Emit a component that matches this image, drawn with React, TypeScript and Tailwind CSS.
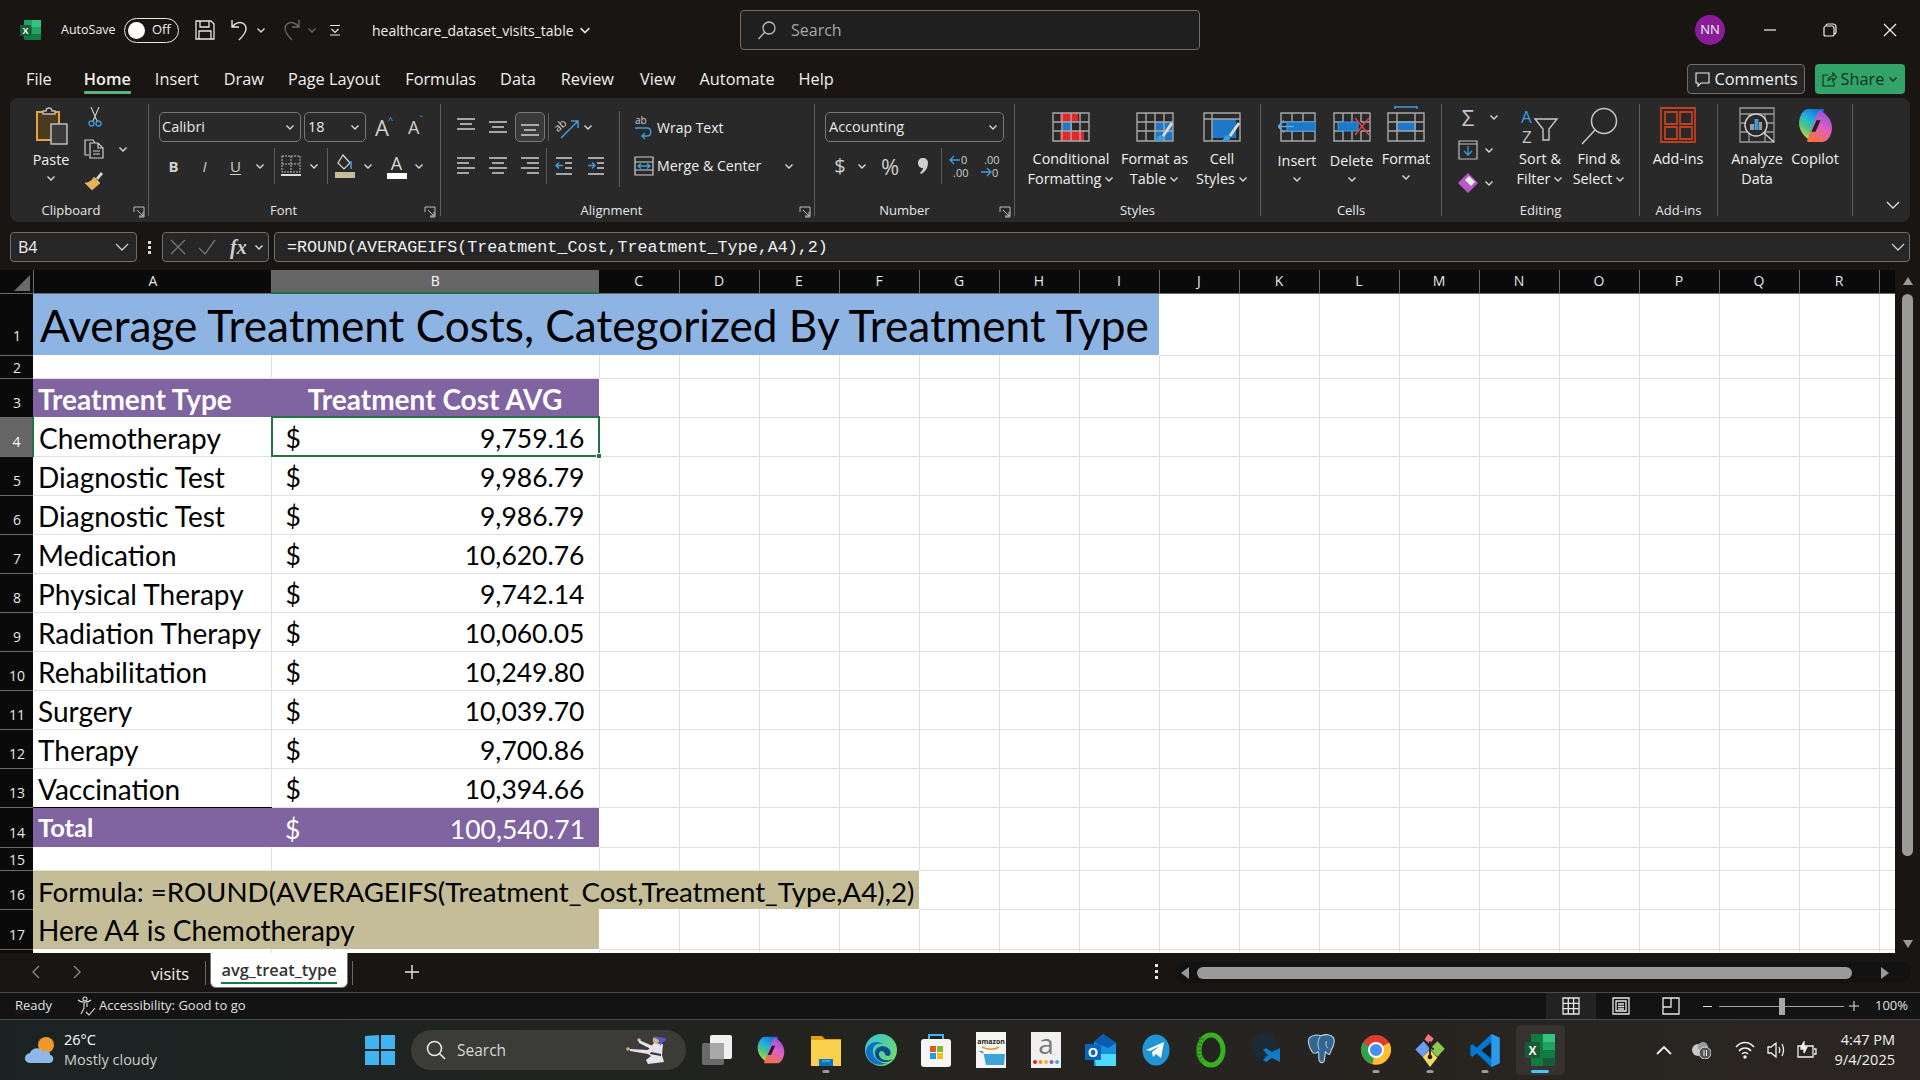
import type { ReactNode } from "react";

const Chev = ({ className = "" }: { className?: string }) => (
  <svg width="10" height="10" viewBox="0 0 10 10" fill="none" stroke="currentColor" strokeWidth="1.4" className={`text-[#d8d8d8] ${className}`}>
    <path d="M1.5 3.5 5 7l3.5-3.5" />
  </svg>
);

const Launcher = ({ className }: { className: string }) => (
  <svg width="12" height="12" viewBox="0 0 12 12" fill="none" stroke="#bdbdbd" strokeWidth="1" className={`absolute ${className}`}>
    <path d="M1 6V1h10v10H6M4 4l6 6M10 6v4H6" />
  </svg>
);

const VSep = ({ className = "h-[36px]" }: { className?: string }) => <div className={`w-px bg-[#5c5c5c] ${className}`} />;

const Group = ({ w, label, labelPad = "", children, launcher }: { w: string; label?: string; labelPad?: string; children: ReactNode; launcher?: string }) => (
  <div className={`relative flex flex-col border-r border-[#5c5c5c] ${w}`}>
    <div className="flex-1 min-h-0">{children}</div>
    <div className={`h-[12px] text-center text-[13px] leading-[12px] text-[#e6e6e6] ${labelPad}`}>{label}</div>
    {launcher && <Launcher className={launcher} />}
  </div>
);

const BigBtn = ({ w, icon, lines, chev, textGap = "" }: { w: string; icon: ReactNode; lines: string[]; chev?: boolean; textGap?: string }) => (
  <div className={`flex flex-col items-center ${w}`}>
    <div className="flex h-[45px] items-start justify-center">{icon}</div>
    <div className={textGap}>
      {lines.map((l, i) => (
        <div key={l} className="flex h-[20px] items-center justify-center gap-[3px] whitespace-nowrap text-[14.400px] leading-[20px] text-[#f0f0f0]">
          {l}
          {chev && i === lines.length - 1 && <Chev />}
        </div>
      ))}
    </div>
  </div>
);

const LinesIcon = ({ d, stroke = "#cfcfcf" }: { d: string; stroke?: string }) => (
  <svg width="20" height="20" viewBox="0 0 20 20" fill="none" stroke={stroke} strokeWidth="1.4">
    <path d={d} />
  </svg>
);

const GridFrame = ({ children }: { children: ReactNode }) => (
  <svg width="38" height="30" viewBox="0 0 38 30" fill="none" className="mt-[8px]">
    {children}
  </svg>
);

const gridLines = "M1 1h36v28H1zM1 10h36M1 19h36M10 1v28M19 1v28M28 1v28";

const CopilotIcon = ({ size, id }: { size: number; id: string }) => (
  <svg width={size} height={size} viewBox="0 0 36 36">
    <defs>
      <linearGradient id={`${id}a`} x1="0.700" y1="0" x2="0.200" y2="1">
        <stop offset="0" stopColor="#1470d8" />
        <stop offset="0.350" stopColor="#1eb0e0" />
        <stop offset="0.650" stopColor="#50c878" />
        <stop offset="1" stopColor="#f5d030" />
      </linearGradient>
      <linearGradient id={`${id}b`} x1="0.700" y1="0" x2="0.300" y2="1">
        <stop offset="0" stopColor="#9050e0" />
        <stop offset="0.500" stopColor="#e060c0" />
        <stop offset="1" stopColor="#f8703c" />
      </linearGradient>
    </defs>
    <path d="M11 2h14c2 0 1 2 0 4L17 28c-1 3-3 6-5 4C6 28 2 22 2 16 2 9 6 2 11 2z" fill={`url(#${id}a)`} />
    <path d="M25 34H11c-2 0-1-2 0-4l8-22c1-3 3-6 5-4 6 4 10 10 10 16 0 7-4 14-9 14z" fill={`url(#${id}b)`} />
    <path d="M19 13h4l-5 11h-4z" fill="#1e1e30" />
  </svg>
);

function TitleBar() {
  return (
    <div className="flex h-[60px] items-center text-[#f0f0f0]">
      <svg width="22" height="22" viewBox="0 0 22 22" className="ml-[19px]">
        <rect x="5" y="1" width="17" height="20" rx="1" fill="#107c41" />
        <rect x="13" y="1" width="9" height="7" fill="#33c481" />
        <rect x="13" y="8" width="9" height="7" fill="#21a366" />
        <rect x="5" y="1" width="8" height="7" fill="#21a366" />
        <rect x="1" y="6" width="11" height="11" rx="1" fill="#185c37" />
        <text x="3.500" y="15" fontSize="9" fontWeight="700" fill="#fff" fontFamily="Liberation Sans">X</text>
      </svg>
      <span className="ml-[20px] w-[55px] whitespace-nowrap text-[12.500px]">AutoSave</span>
      <div className="ml-[8px] flex h-[25px] w-[55px] items-center rounded-full border border-[#e8e8e8] pl-[3px]">
        <div className="h-[17px] w-[17px] rounded-full bg-white" />
        <span className="ml-[7px] text-[13px]">Off</span>
      </div>
      <svg width="20" height="20" viewBox="0 0 20 20" fill="none" stroke="#e6e6e6" strokeWidth="1.300" className="ml-[16px]">
        <path d="M1 1h15l3 3v15H1zM5 1v6h9V1M4 19v-8h12v8" />
      </svg>
      <svg width="20" height="22" viewBox="0 0 20 22" fill="none" stroke="#e6e6e6" strokeWidth="1.400" className="ml-[15px]">
        <path d="M2 1v7h7M2 8c3-4 8-6 12-3 4 4 2 9-5 16" />
      </svg>
      <Chev className="ml-[6px]" />
      <svg width="20" height="22" viewBox="0 0 20 22" fill="none" stroke="#6a6a6a" strokeWidth="1.400" className="ml-[15px]">
        <path d="M18 1v7h-7M18 8c-3-4-8-6-12-3-4 4-2 9 5 16" />
      </svg>
      <Chev className="ml-[6px] !text-[#666]" />
      <svg width="12" height="12" viewBox="0 0 12 12" fill="none" stroke="#e6e6e6" strokeWidth="1.200" className="ml-[12px]">
        <path d="M1 1.500h10M2.500 5 6 8.500 9.500 5M1 11h10" />
      </svg>
      <span className="ml-[31px] w-[202px] whitespace-nowrap text-[14px]">healthcare_dataset_visits_table</span>
      <Chev className="ml-[6px] scale-125" />
      <div className="ml-[150px] flex h-[40px] w-[460px] items-center rounded-[4px] border border-[#6e6e6e] bg-[#1f1f1f]">
        <svg width="20" height="20" viewBox="0 0 20 20" fill="none" stroke="#bdbdbd" strokeWidth="1.300" className="ml-[16px]">
          <circle cx="12" cy="8" r="6" />
          <path d="M7.500 12.500 1.500 19" />
        </svg>
        <span className="ml-[14px] text-[16px] text-[#a8a8a8]">Search</span>
      </div>
      <div className="ml-[495px] flex h-[30px] w-[30px] items-center justify-center rounded-full bg-[#8a1c9a] text-[13px]">NN</div>
      <svg width="14" height="14" viewBox="0 0 14 14" stroke="#eee" strokeWidth="1.200" className="ml-[38px]">
        <path d="M1 7h12" />
      </svg>
      <svg width="14" height="14" viewBox="0 0 14 14" fill="none" stroke="#eee" strokeWidth="1.200" className="ml-[46px]">
        <path d="M3 3V2.500C3 1.500 4 1 5 1h5c2 0 3 1 3 3v5c0 1-.5 2-1.500 2M1 5c0-1 1-2 2-2h6c1 0 2 1 2 2v7c0 1-1 1-2 1H3c-1 0-2 0-2-1z" />
      </svg>
      <svg width="14" height="14" viewBox="0 0 14 14" stroke="#eee" strokeWidth="1.300" className="ml-[46px]">
        <path d="M1 1l12 12M13 1 1 13" />
      </svg>
    </div>
  );
}

function TabsRow() {
  const tabs = [
    ["File", "ml-[26px]"],
    ["Home", "ml-[32px]"],
    ["Insert", "ml-[24px]"],
    ["Draw", "ml-[25px]"],
    ["Page Layout", "ml-[24px]"],
    ["Formulas", "ml-[25px]"],
    ["Data", "ml-[24px]"],
    ["Review", "ml-[25px]"],
    ["View", "ml-[26px]"],
    ["Automate", "ml-[24px]"],
    ["Help", "ml-[24px]"],
  ];
  return (
    <div className="flex h-[38px] items-start text-[16.300px] text-[#f0f0f0]">
      {tabs.map(([t, m]) => (
        <div key={t} className={`relative mt-[8px] leading-[22px] ${m} ${t === "Home" ? "font-semibold" : ""}`}>
          {t}
          {t === "Home" && <div className="absolute -bottom-[4px] left-0 right-0 h-[3px] rounded-[1px] bg-[#5cb27f]" />}
        </div>
      ))}
      <div className="ml-auto mt-[4px] flex h-[30px] w-[118px] items-center justify-center gap-[5px] rounded-[4px] border border-[#6e6e6e] bg-[#262626]">
        <svg width="15" height="15" viewBox="0 0 15 15" fill="none" stroke="#eee" strokeWidth="1.100">
          <path d="M1 1h13v10H6l-3 3v-3H1z" />
        </svg>
        <span>Comments</span>
      </div>
      <div className="ml-[10px] mr-[15px] mt-[4px] flex h-[30px] w-[90px] items-center justify-center gap-[4px] rounded-[4px] bg-[#33a467] text-[#10301f]">
        <svg width="15" height="16" viewBox="0 0 15 16" fill="none" stroke="#10301f" strokeWidth="1.100">
          <path d="M6 4H1v11h11v-4M6 10c0-3 2-5 5-5V2l3.500 4L11 10V7.500C9 7.500 7 8 6 10z" />
        </svg>
        <span>Share</span>
        <Chev className="!text-[#10301f]" />
      </div>
    </div>
  );
}

function Ribbon() {
  return (
    <div className="mx-[10px] flex h-[124px] rounded-[8px] bg-[#292929] py-[6px] text-[#e8e8e8]">
      <Group w="w-[139px]" label="Clipboard" labelPad="pr-[16px]" launcher="bottom-[-2px] right-[3px]">
        <div className="flex pl-[17px] pt-[3px]">
          <div className="flex w-[48px] flex-col items-center">
            <svg width="34" height="38" viewBox="0 0 34 38" fill="none">
              <path d="M3 5h22v28H3z" fill="#4a3a1e" stroke="#e8a33d" strokeWidth="2" />
              <path d="M9 7V4h3c0-4 6-4 6 0h3v3z" fill="#292929" stroke="#bdbdbd" strokeWidth="1.400" />
              <rect x="17" y="17" width="16" height="20" fill="#3a3a3a" stroke="#c8c8c8" strokeWidth="1.400" />
            </svg>
            <span className="mt-[5px] text-[14.400px] leading-[20px] text-[#f0f0f0]">Paste</span>
            <Chev className="mt-[3px]" />
          </div>
          <div className="ml-[9px] flex w-[56px] flex-col">
            <svg width="14" height="20" viewBox="0 0 14 20" fill="none" className="ml-[4px]">
              <path d="M3 0l6 14M11 0 5 14" stroke="#cfcfcf" strokeWidth="1.100" />
              <circle cx="3.500" cy="16.500" r="2.500" stroke="#3d9be0" strokeWidth="1.300" />
              <circle cx="10.500" cy="16.500" r="2.500" stroke="#3d9be0" strokeWidth="1.300" />
            </svg>
            <div className="mt-[12px] flex items-center">
              <svg width="20" height="20" viewBox="0 0 20 20" fill="none" stroke="#cfcfcf" strokeWidth="1.200">
                <path d="M5 16H1V1h8l2 3M6 4h8l5 5v10H6zM14 4v5h5M9 12h7M9 15h7" />
              </svg>
              <Chev className="ml-[14px]" />
            </div>
            <svg width="20" height="20" viewBox="0 0 20 20" fill="none" className="mt-[12px]">
              <path d="M12 7l5-6 2 2-5 6z" fill="#d8d8d8" />
              <path d="M10 6l6 6-8 7-7-7c3 0 7-2 9-6z" fill="#e8b25a" stroke="#f0c77a" strokeWidth="0.600" />
            </svg>
          </div>
        </div>
      </Group>
      <Group w="w-[292px]" label="Font" labelPad="pr-[22px]" launcher="bottom-[-2px] right-[4px]">
        <div className="flex items-center pl-[10px] pt-[8px]">
          <div className="flex h-[30px] w-[142px] items-center justify-between rounded-[5px] border border-[#777] pl-[2px] pr-[5px] text-[14.500px]">
            Calibri <Chev />
          </div>
          <div className="ml-[3px] flex h-[30px] w-[62px] items-center justify-between rounded-[5px] border border-[#777] pl-[3px] pr-[5px] text-[14.500px]">
            18 <Chev />
          </div>
          <div className="ml-[9px] flex w-[20px] items-start text-[22px] leading-[24px] text-[#cfcfcf]">
            A<span className="-ml-[1px] text-[9px] leading-[9px] text-[#5aa9e6]">^</span>
          </div>
          <div className="ml-[13px] flex w-[22px] items-start text-[18px] leading-[24px] text-[#cfcfcf]">
            A<span className="text-[9px] leading-[9px] text-[#5aa9e6]">ˇ</span>
          </div>
        </div>
        <div className="mt-[6px] flex h-[36px] items-center pl-[9px] text-[#cfcfcf]">
          <div className="w-[31px] text-center text-[15px] font-bold">B</div>
          <div className="w-[31px] text-center text-[15px] italic">I</div>
          <div className="w-[31px] text-center text-[15px] underline underline-offset-2">U</div>
          <div className="flex w-[18px] justify-center"><Chev /></div>
          <VSep className="ml-[5px] h-[36px]" />
          <svg width="20" height="22" viewBox="0 0 20 22" fill="none" stroke="#bdbdbd" strokeWidth="1" strokeDasharray="2 1" className="ml-[6px]">
            <path d="M1 1h18v16H1zM10 1v16M1 9h18" />
            <path d="M0 20h20" strokeDasharray="none" strokeWidth="2" stroke="#d8d8d8" />
          </svg>
          <div className="flex w-[26px] justify-center"><Chev /></div>
          <VSep />
          <svg width="20" height="24" viewBox="0 0 20 24" fill="none" className="ml-[7px]">
            <path d="M8 1l7 8-6 6-6-6z" stroke="#d8d8d8" strokeWidth="1.200" />
            <path d="M16 7v8" stroke="#3d9be0" strokeWidth="1.600" />
            <rect x="0" y="18" width="20" height="6" fill="#c4bd97" />
          </svg>
          <div className="flex w-[26px] justify-center"><Chev /></div>
          <div className="ml-[5px] flex w-[21px] flex-col items-center">
            <span className="text-[18px] leading-[18px] text-[#d8d8d8]">A</span>
            <div className="mt-[1px] h-[6px] w-[20px] bg-white" />
          </div>
          <div className="flex w-[24px] justify-center"><Chev /></div>
        </div>
      </Group>
      <Group w="w-[374px]" label="Alignment" labelPad="pr-[32px]" launcher="bottom-[-2px] right-[3px]">
        <div className="flex">
          <div className="w-[178px] pl-[14px] pt-[8px]">
            <div className="flex h-[30px] items-center">
              <div className="flex w-[32px] justify-start pl-[1px]"><LinesIcon d="M1 2h18M4 7h12M1 12h18" /></div>
              <div className="flex w-[28px] justify-start pl-[1px]"><LinesIcon d="M1 5h18M4 10h12M1 15h18" /></div>
              <div className="flex h-[30px] w-[30px] items-center justify-center rounded-[5px] border border-[#777] bg-[#3a3a3a]"><LinesIcon d="M1 8h18M4 13h12M1 18h18" /></div>
              <VSep className="ml-[3px] h-[28px]" />
              <svg width="24" height="24" viewBox="0 0 24 24" fill="none" className="ml-[6px] overflow-visible">
                <text x="0" y="14" fontSize="11" fill="#cfcfcf" fontFamily="Open Sans" transform="rotate(-40 6 12)">ab</text>
                <path d="M6 23 23 6M16 6h7v7" stroke="#3d9be0" strokeWidth="1.500" />
              </svg>
              <Chev className="ml-[4px]" />
            </div>
            <div className="mt-[6px] flex h-[36px] items-center">
              <div className="flex w-[32px] pl-[1px]"><LinesIcon d="M1 2h18M1 7h12M1 12h18M1 17h12" /></div>
              <div className="flex w-[32px] pl-[1px]"><LinesIcon d="M1 2h18M4 7h12M1 12h18M4 17h12" /></div>
              <div className="flex w-[27px] pl-[1px]"><LinesIcon d="M1 2h18M7 7h12M1 12h18M7 17h12" /></div>
              <VSep />
              <div className="ml-[7px] w-[32px]">
                <svg width="20" height="20" viewBox="0 0 20 20" fill="none" stroke="#cfcfcf" strokeWidth="1.400"><path d="M2 2h16M11 7h7M11 12h7M2 18h16" /><path d="M9 9.500H2M5 6.500l-3 3 3 3" stroke="#3d9be0" /></svg>
              </div>
              <svg width="20" height="20" viewBox="0 0 20 20" fill="none" stroke="#cfcfcf" strokeWidth="1.400"><path d="M2 2h16M11 7h7M11 12h7M2 18h16" /><path d="M2 9.500h7M6 6.500l3 3-3 3" stroke="#3d9be0" /></svg>
            </div>
          </div>
          <VSep className="mt-[7px] h-[76px]" />
          <div className="pl-[12px] pt-[8px]">
            <div className="flex h-[30px] items-center">
              <svg width="22" height="24" viewBox="0 0 22 24" fill="none" className="overflow-visible">
                <text x="3" y="9" fontSize="10" fill="#cfcfcf" fontFamily="Open Sans">ab</text>
                <path d="M3 13h12c5 0 5 8 0 8h-4M13 18l-3 3 3 3" stroke="#3d9be0" strokeWidth="1.400" />
              </svg>
              <span className="ml-[3px] text-[14px] text-[#f0f0f0]">Wrap Text</span>
            </div>
            <div className="mt-[6px] flex h-[36px] items-center">
              <svg width="22" height="22" viewBox="0 0 22 22" fill="none" stroke="#cfcfcf" strokeWidth="1.200">
                <path d="M3 2h18v18H3zM3 7h18M3 15h18" />
                <path d="M6 11h12M9 8.500 6 11l3 2.500M15 8.500 18 11l-3 2.500" stroke="#3d9be0" strokeWidth="1.400" />
              </svg>
              <span className="ml-[3px] text-[14.200px] text-[#f0f0f0]">Merge &amp; Center</span>
              <Chev className="ml-[23px]" />
            </div>
          </div>
        </div>
      </Group>
      <Group w="w-[200px]" label="Number" labelPad="pr-[20px]" launcher="bottom-[-2px] right-[3px]">
        <div className="pl-[10px] pt-[8px]">
          <div className="flex h-[30px] w-[179px] items-center justify-between rounded-[5px] border border-[#777] pl-[3px] pr-[5px] text-[14.500px]">
            Accounting <Chev />
          </div>
          <div className="mt-[6px] flex h-[36px] items-center text-[#cfcfcf]">
            <span className="ml-[8px] w-[14px] text-center text-[20px]">$</span>
            <Chev className="ml-[10px]" />
            <span className="ml-[11px] w-[24px] text-center text-[22px]">%</span>
            <svg width="12" height="18" viewBox="0 0 12 18" className="ml-[15px]">
              <path d="M6 1c3 0 5 2 5 5 0 5-3 9-7 11l-1-1c2-2 3-4 3-5C3 11 1 9 1 6s2-5 5-5z" fill="#cfcfcf" />
            </svg>
            <VSep className="ml-[12px] h-[36px]" />
            <svg width="22" height="26" viewBox="0 0 22 26" className="ml-[7px] overflow-visible">
              <path d="M1 7h10M5 3 1 7l4 4" fill="none" stroke="#3d9be0" strokeWidth="1.400" />
              <text x="12" y="11" fontSize="11" fill="#cfcfcf" fontFamily="Open Sans">0</text>
              <text x="4" y="24" fontSize="11" fill="#cfcfcf" fontFamily="Open Sans">.00</text>
            </svg>
            <svg width="22" height="26" viewBox="0 0 22 26" className="ml-[9px] overflow-visible">
              <text x="4" y="11" fontSize="11" fill="#cfcfcf" fontFamily="Open Sans">.00</text>
              <path d="M1 19h10M7 15l4 4-4 4" fill="none" stroke="#3d9be0" strokeWidth="1.400" />
              <text x="12" y="24" fontSize="11" fill="#cfcfcf" fontFamily="Open Sans">0</text>
            </svg>
          </div>
        </div>
      </Group>
      <Group w="w-[246px]" label="Styles">
        <div className="flex pl-[10px]">
          <BigBtn
            w="w-[92px]"
            lines={["Conditional", "Formatting"]}
            chev
            icon={
              <GridFrame>
                <path d="M8 1h18v9H8zM8 19h24v10H8z" fill="#e0282a" />
                <path d="M10 10h10v9H10z" fill="#1e78c8" />
                <path d={gridLines} stroke="#a8a8a8" strokeWidth="1.400" />
              </GridFrame>
            }
          />
          <BigBtn
            w="w-[75px]"
            lines={["Format as", "Table"]}
            chev
            icon={
              <GridFrame>
                <path d="M19 10h18v18H19z" fill="#1e78c8" />
                <path d={gridLines} stroke="#a8a8a8" strokeWidth="1.400" />
                <path d="M36 11 27 24" stroke="#d8d8d8" strokeWidth="3" />
                <path d="M22 24c3-2 6 0 5 3-2 3-6 3-9 2 2-1 3-3 4-5z" fill="#3d9be0" />
              </GridFrame>
            }
          />
          <BigBtn
            w="w-[60px]"
            lines={["Cell", "Styles"]}
            chev
            icon={
              <GridFrame>
                <path d="M9 7h24v19H9z" fill="#1e78c8" />
                <path d="M1 1h36v28H1zM1 7h36M9 1v28" stroke="#a8a8a8" strokeWidth="1.400" />
                <path d="M36 11 27 24" stroke="#d8d8d8" strokeWidth="3" />
                <path d="M22 24c3-2 6 0 5 3-2 3-6 3-9 2 2-1 3-3 4-5z" fill="#3d9be0" />
              </GridFrame>
            }
          />
        </div>
      </Group>
      <Group w="w-[181px]" label="Cells">
        <div className="flex pl-[9px]">
          <div className="w-[54px]">
            <BigBtn
              w="w-[54px]"
              lines={["Insert"]}
              textGap="mt-[2px]"
              icon={
                <GridFrame>
                  <path d="M3 1h34v28H3zM3 10h34M3 19h34M14 1v28M25 1v28" stroke="#a8a8a8" strokeWidth="1.400" />
                  <path d="M9 10h29v9H9z" fill="#1e78c8" stroke="#3d9be0" />
                  <path d="M16 14.500H0M6 8.500l-6 6 6 6" stroke="#5aa9e6" strokeWidth="1.500" />
                </GridFrame>
              }
            />
            <div className="mt-[3px] flex justify-center"><Chev /></div>
          </div>
          <div className="w-[55px]">
            <BigBtn
              w="w-[55px]"
              lines={["Delete"]}
              textGap="mt-[2px]"
              icon={
                <GridFrame>
                  <path d="M1 1h36v28H1zM1 10h10M1 19h10M28 10h9M28 19h9M10 1v9M10 19v10M19 1v9M19 19v10M28 1v9M28 19v10" stroke="#a8a8a8" strokeWidth="1.400" />
                  <path d="M5 10h20v9H5z" fill="#1e78c8" stroke="#3d9be0" />
                  <path d="M22 6l14 17M36 6 22 23" stroke="#e04040" strokeWidth="1.600" />
                </GridFrame>
              }
            />
            <div className="mt-[3px] flex justify-center"><Chev /></div>
          </div>
          <div className="w-[54px]">
            <BigBtn
              w="w-[54px]"
              lines={["Format"]}
              icon={
                <svg width="38" height="36" viewBox="0 0 38 36" fill="none" className="mt-[2px]">
                  <path d="M8 1h22M8 0v3M30 0v3" stroke="#3d9be0" strokeWidth="1.400" />
                  <path d="M9 15h20v10H9z" fill="#1e78c8" />
                  <path d="M1 7h36v28H1zM1 16h36M1 25h36M10 7v28M28 7v28" stroke="#a8a8a8" strokeWidth="1.400" />
                </svg>
              }
            />
            <div className="mt-[3px] flex justify-center"><Chev /></div>
          </div>
        </div>
      </Group>
      <Group w="w-[198px]" label="Editing">
        <div className="flex pl-[16px]">
          <div className="flex w-[51px] flex-col gap-[13px] pt-[3px]">
            <div className="flex items-center">
              <span className="w-[20px] text-center text-[22px] leading-[20px] text-[#c8c8c8]">Σ</span>
              <Chev className="ml-[11px]" />
            </div>
            <div className="flex items-center">
              <svg width="20" height="20" viewBox="0 0 20 20" fill="none">
                <path d="M1 1h18v18H1zM1 4h18" stroke="#bdbdbd" strokeWidth="1.200" />
                <path d="M10 6v9M6 11l4 4 4-4" stroke="#3d9be0" strokeWidth="1.300" />
              </svg>
              <Chev className="ml-[6px]" />
            </div>
            <div className="flex items-center">
              <svg width="20" height="20" viewBox="0 0 20 20" fill="none">
                <path d="M10 0l10 10-10 10L0 10z" fill="#b65ac8" />
                <path d="M7 7l6 6 4-4-6-6z" fill="#e8e8e8" />
              </svg>
              <Chev className="ml-[6px]" />
            </div>
          </div>
          <BigBtn
            w="w-[62px]"
            lines={["Sort &", "Filter"]}
            chev
            icon={
              <svg width="38" height="38" viewBox="0 0 38 38" className="mt-[3px] overflow-visible">
                <text x="0" y="16" fontSize="17" fill="#3d9be0" fontFamily="Open Sans">A</text>
                <text x="1" y="36" fontSize="17" fill="#c8c8c8" fontFamily="Open Sans">Z</text>
                <path d="M14 12h22l-8 10v11h-6V22z" fill="none" stroke="#c8c8c8" strokeWidth="1.400" />
              </svg>
            }
          />
          <BigBtn
            w="w-[56px]"
            lines={["Find &", "Select"]}
            chev
            icon={
              <svg width="38" height="38" viewBox="0 0 38 38" fill="none" stroke="#c8c8c8" strokeWidth="1.500" className="mt-[3px]">
                <circle cx="24" cy="14" r="12.500" />
                <path d="M15 23 2 37" />
              </svg>
            }
          />
        </div>
      </Group>
      <Group w="w-[78px]" label="Add-ins">
        <div className="flex flex-col items-center pr-[1px]">
          <BigBtn
            w="w-[70px]"
            lines={["Add-ins"]}
            icon={
              <svg width="36" height="36" viewBox="0 0 36 36" fill="none" stroke="#c43e1c" strokeWidth="1.800" className="mt-[3px]">
                <path d="M1 1h34v34H1zM5 5h12v12H5zM20 5h12v12H20zM5 20h12v12H5zM20 20h12v12H20z" />
              </svg>
            }
          />
        </div>
      </Group>
      <Group w="w-[135px]">
        <div className="flex pl-[10px]">
          <BigBtn
            w="w-[58px]"
            lines={["Analyze", "Data"]}
            icon={
              <svg width="36" height="36" viewBox="0 0 36 36" fill="none" className="mt-[3px]">
                <path d="M1 1h34v34H1zM1 7h34M1 16h34M1 25h34M10 7v28M26 7v28" stroke="#9a9a9a" strokeWidth="1.300" />
                <circle cx="17" cy="18" r="11" fill="#292929" stroke="#d0d0d0" strokeWidth="1.400" />
                <path d="M25 26l10 9" stroke="#d0d0d0" strokeWidth="1.600" />
                <path d="M11 17h4v6h-4z" fill="#9a9a9a" />
                <path d="M15.500 12h4v11h-4z" fill="#3d9be0" />
                <path d="M20 15h3v8h-3z" fill="#9a9a9a" />
              </svg>
            }
          />
          <BigBtn w="w-[58px]" lines={["Copilot"]} icon={<div className="mt-[3px]"><CopilotIcon size={37} id="cpr" /></div>} />
        </div>
      </Group>
      <div className="flex flex-1 items-end justify-center pb-[6px] pl-[22px]">
        <svg width="14" height="10" viewBox="0 0 14 10" fill="none" stroke="#e0e0e0" strokeWidth="1.300">
          <path d="M1 2l6 6 6-6" />
        </svg>
      </div>
    </div>
  );
}

function FormulaBar() {
  return (
    <div className="mx-[10px] mt-[10px] flex h-[30px] items-center text-[#f0f0f0]">
      <div className="flex h-full w-[127px] items-center justify-between rounded-[4px] border border-[#6e6e6e] bg-[#262626] pl-[7px] pr-[7px] text-[16px]">
        B4
        <svg width="14" height="10" viewBox="0 0 14 10" fill="none" stroke="#cfcfcf" strokeWidth="1.300"><path d="M1 2l6 6 6-6" /></svg>
      </div>
      <div className="ml-[11px] flex flex-col gap-[2px]">
        <div className="h-[3px] w-[3px] bg-[#d8d8d8]" />
        <div className="h-[3px] w-[3px] bg-[#d8d8d8]" />
        <div className="h-[3px] w-[3px] bg-[#d8d8d8]" />
      </div>
      <div className="ml-[11px] flex h-full w-[107px] items-center rounded-[4px] border border-[#6e6e6e] bg-[#262626]">
        <svg width="16" height="16" viewBox="0 0 16 16" stroke="#777" strokeWidth="1.300" className="ml-[7px]"><path d="M1 1l14 14M15 1 1 15" /></svg>
        <svg width="18" height="16" viewBox="0 0 18 16" fill="none" stroke="#777" strokeWidth="1.300" className="ml-[12px]"><path d="M1 9l6 6L17 1" /></svg>
        <span className="ml-[14px] font-['Liberation_Serif',serif] text-[20px] font-bold italic text-[#cfcfcf]">fx</span>
        <Chev className="ml-[7px]" />
      </div>
      <div className="ml-[5px] flex h-full flex-1 items-center justify-between rounded-[4px] border border-[#6e6e6e] bg-[#262626] pl-[12px] pr-[4px]">
        <span className="pt-[1px] font-['Liberation_Mono',monospace] text-[16.700px]">=ROUND(AVERAGEIFS(Treatment_Cost,Treatment_Type,A4),2)</span>
        <svg width="14" height="10" viewBox="0 0 14 10" fill="none" stroke="#cfcfcf" strokeWidth="1.300"><path d="M1 2l6 6 6-6" /></svg>
      </div>
    </div>
  );
}

const letters = ["C", "D", "E", "F", "G", "H", "I", "J", "K", "L", "M", "N", "O", "P", "Q", "R", ""];

const data: [string, string][] = [
  ["Chemotherapy", "9,759.16"],
  ["Diagnostic Test", "9,986.79"],
  ["Diagnostic Test", "9,986.79"],
  ["Medication", "10,620.76"],
  ["Physical Therapy", "9,742.14"],
  ["Radiation Therapy", "10,060.05"],
  ["Rehabilitation", "10,249.80"],
  ["Surgery", "10,039.70"],
  ["Therapy", "9,700.86"],
  ["Vaccination", "10,394.66"],
];

const gridCell = "border-r border-b border-[#e0e0e0]";
const cellFont = "text-[28px] leading-[35px] whitespace-nowrap";
const numFont = "text-[26.500px] leading-[35px] whitespace-nowrap";

const RowHead = ({ n, active, pb = "pb-[6px]" }: { n: number; active?: boolean; pb?: string }) => (
  <td className={`border-b border-[#6a6a6a] p-0 align-bottom font-['Open_Sans',sans-serif] text-[14px] leading-[16px] ${active ? "border-r-2 border-r-[#217346] bg-[#666] text-white" : "bg-[#0a0a0a] text-[#e8e8e8]"}`}>
    <div className={`pl-[1px] text-center ${pb}`}>{n}</div>
  </td>
);

const Blanks = ({ n, from = 0 }: { n: number; from?: number }) => (
  <>
    {letters.slice(from, from + n).map((l, i) => (
      <td key={`${l}${i}`} className={`p-0 ${gridCell}`} />
    ))}
  </>
);

function Sheet() {
  return (
    <div className="h-[683px] w-[1895px] overflow-hidden bg-white">
      <table className="w-[1895px] table-fixed font-['Lato',sans-serif] text-black">
        <colgroup>
          <col className="w-[33px]" />
          <col className="w-[238px]" />
          <col className="w-[328px]" />
          {letters.map((l) => (
            <col key={l} className={l ? "w-[80px]" : "w-[16px]"} />
          ))}
        </colgroup>
        <tbody>
          <tr className="h-[23px] font-['Open_Sans',sans-serif] text-[14px] leading-[22px] text-[#e8e8e8]">
            <td className="relative border-r border-b border-[#6a6a6a] bg-[#0a0a0a] p-0">
              <div className="absolute bottom-[2px] right-[3px] h-0 w-0 border-b-[16px] border-l-[16px] border-b-[#6a6a6a] border-l-transparent" />
            </td>
            <td className="border-r border-b border-[#6a6a6a] bg-[#0a0a0a] p-0 pl-[2px] text-center">A</td>
            <td className="border-b-2 border-b-[#217346] bg-[#666] p-0 text-center text-white">B</td>
            {letters.map((l) => (
              <td key={l} className="border-r border-b border-[#6a6a6a] bg-[#0a0a0a] p-0 text-center">{l}</td>
            ))}
          </tr>
          <tr className="h-[62px]">
            <RowHead n={1} pb="pb-[11px]" />
            <td colSpan={9} className="bg-[#8db4e2] p-0 pl-[7px] align-middle text-[44.200px] leading-[50px] whitespace-nowrap">
              Average Treatment Costs, Categorized By Treatment Type
            </td>
            <Blanks n={10} from={7} />
          </tr>
          <tr className="h-[23px]">
            <RowHead n={2} pb="pb-[2px]" />
            <td className={`p-0 ${gridCell}`} />
            <td className={`p-0 ${gridCell}`} />
            <Blanks n={17} />
          </tr>
          <tr className="h-[39px]">
            <RowHead n={3} />
            <td className={`border-t border-black bg-[#8064a2] p-0 pl-[5px] align-bottom font-bold text-white ${cellFont}`}>Treatment Type</td>
            <td className={`border-t border-black bg-[#8064a2] p-0 text-center align-bottom font-bold text-white ${cellFont}`}>Treatment Cost AVG</td>
            <Blanks n={17} />
          </tr>
          {data.map(([name, value], i) => (
            <tr key={`${name}${i}`} className="h-[39px]">
              <RowHead n={i + 4} active={i === 0} />
              <td className={`p-0 pl-[5px] align-bottom ${cellFont} ${gridCell} ${i === 9 ? "border-b-black" : ""}`}>{name}</td>
              <td className={`relative p-0 align-bottom ${numFont} ${gridCell}`}>
                <div className="flex justify-between pl-[14px] pr-[14px]">
                  <span>$</span>
                  <span>{value}</span>
                </div>
                {i === 0 && (
                  <>
                    <div className="absolute -inset-[1px] border-2 border-[#217346]" />
                    <div className="absolute -bottom-[3px] -right-[3px] h-[6px] w-[6px] border border-white bg-[#217346]" />
                  </>
                )}
              </td>
              <Blanks n={17} />
            </tr>
          ))}
          <tr className="h-[40px]">
            <RowHead n={14} />
            <td className="bg-[#8064a2] p-0 pb-[2px] pl-[5px] align-bottom text-[25.500px] leading-[35px] font-bold whitespace-nowrap text-white">Total</td>
            <td className={`bg-[#8064a2] p-0 align-bottom text-white ${numFont}`}>
              <div className="flex justify-between pl-[14px] pr-[14px]">
                <span>$</span>
                <span>100,540.71</span>
              </div>
            </td>
            <Blanks n={17} />
          </tr>
          <tr className="h-[23px]">
            <RowHead n={15} pb="pb-[2px]" />
            <td className={`p-0 ${gridCell}`} />
            <td className={`p-0 ${gridCell}`} />
            <Blanks n={17} />
          </tr>
          <tr className="h-[39px]">
            <RowHead n={16} />
            <td colSpan={6} className="bg-[#c4bd97] p-0 pl-[5px] align-bottom text-[27.700px] leading-[35px] whitespace-nowrap">
              Formula: =ROUND(AVERAGEIFS(Treatment_Cost,Treatment_Type,A4),2)
            </td>
            <Blanks n={13} from={4} />
          </tr>
          <tr className="h-[40px]">
            <RowHead n={17} />
            <td colSpan={2} className={`bg-[#c4bd97] p-0 pb-[1px] pl-[5px] align-bottom ${cellFont}`}>Here A4 is Chemotherapy</td>
            <Blanks n={17} />
          </tr>
          <tr className="h-[30px]">
            <td className="bg-[#0a0a0a] p-0" />
            <td className={`p-0 ${gridCell}`} />
            <td className={`p-0 ${gridCell}`} />
            <Blanks n={17} />
          </tr>
        </tbody>
      </table>
    </div>
  );
}

function VScroll() {
  return (
    <div className="flex h-[683px] w-[25px] flex-col items-center">
      <div className="h-[23px]" />
      <svg width="12" height="10" viewBox="0 0 12 10" className="mt-[-17px]"><path d="M6 1l5 8H1z" fill="#9a9a9a" /></svg>
      <div className="mt-[8px] h-[562px] w-[11px] rounded-full bg-[#9a9a9a]" />
      <div className="flex-1" />
      <svg width="12" height="10" viewBox="0 0 12 10" className="mb-[4px]"><path d="M6 9l5-8H1z" fill="#9a9a9a" /></svg>
    </div>
  );
}

function SheetTabs() {
  return (
    <div className="flex h-[40px] items-start border-b border-[#4a4a4a] text-[16.500px] text-[#f0f0f0]">
      <svg width="10" height="16" viewBox="0 0 10 16" fill="none" stroke="#8a8a8a" strokeWidth="1.300" className="ml-[31px] mt-[11px]"><path d="M8 2 2 8l6 6" /></svg>
      <svg width="10" height="16" viewBox="0 0 10 16" fill="none" stroke="#8a8a8a" strokeWidth="1.300" className="ml-[31px] mt-[11px]"><path d="M2 2l6 6-6 6" /></svg>
      <span className="ml-[69px] mt-[10px] w-[40px] whitespace-nowrap leading-[22px]">visits</span>
      <div className="ml-[14px] mt-[8px] h-[24px] w-px bg-[#6a6a6a]" />
      <div className="ml-[4px] flex h-[35px] w-[138px] justify-center rounded-b-[6px] border border-t-0 border-[#777] bg-white text-[16.400px] font-semibold text-[#333]">
        <span className="h-[31px] whitespace-nowrap border-b-2 border-[#107c41] leading-[34px]">avg_treat_type</span>
      </div>
      <div className="ml-[4px] mt-[8px] h-[24px] w-px bg-[#6a6a6a]" />
      <svg width="16" height="16" viewBox="0 0 16 16" stroke="#e8e8e8" strokeWidth="1.400" className="ml-[51px] mt-[11px]"><path d="M8 1v14M1 8h14" /></svg>
      <div className="ml-[735px] mt-[11px] flex flex-col gap-[3px]">
        <div className="h-[3px] w-[3px] bg-[#e8e8e8]" />
        <div className="h-[3px] w-[3px] bg-[#e8e8e8]" />
        <div className="h-[3px] w-[3px] bg-[#e8e8e8]" />
      </div>
      <div className="ml-[17px] mt-[9px] flex h-[21px] w-[736px] items-center rounded-full bg-[#121212] pl-[6px]">
        <svg width="9" height="12" viewBox="0 0 9 12"><path d="M8 0v12L0 6z" fill="#9a9a9a" /></svg>
        <div className="ml-[7px] h-[12px] w-[655px] rounded-full bg-[#9a9a9a]" />
        <svg width="9" height="12" viewBox="0 0 9 12" className="ml-[28px]"><path d="M1 0v12l8-6z" fill="#9a9a9a" /></svg>
      </div>
    </div>
  );
}

function StatusBar() {
  return (
    <div className="flex h-[27px] items-center border-b border-[#4a4a4a] bg-[#131313] text-[13px] text-[#e0e0e0]">
      <span className="ml-[15px]">Ready</span>
      <svg width="19" height="20" viewBox="0 0 19 20" fill="none" stroke="#e0e0e0" strokeWidth="1.100" className="ml-[25px]">
        <circle cx="8" cy="3" r="2" />
        <path d="M1 4c3 3 10 3 13 0M7 7v5l-3 6M10 7v4M9 16l3 3 6-7" />
      </svg>
      <span className="ml-[3px]">Accessibility: Good to go</span>
      <div className="ml-auto flex h-full w-[50px] items-center justify-center bg-[#222]">
        <svg width="18" height="18" viewBox="0 0 18 18" fill="none" stroke="#e8e8e8" strokeWidth="1.300"><path d="M1 1h16v16H1zM1 6.300h16M1 11.600h16M6.300 1v16M11.600 1v16" /></svg>
      </div>
      <svg width="18" height="18" viewBox="0 0 18 18" fill="none" stroke="#e8e8e8" strokeWidth="1.300" className="ml-[16px]"><path d="M1 1h16v16H1zM4 4h10v10H4zM6 7h6M6 9.500h6M6 12h6" /></svg>
      <svg width="18" height="18" viewBox="0 0 18 18" fill="none" stroke="#e8e8e8" strokeWidth="1.300" className="ml-[32px]"><path d="M1 1h16v16H1zM9 1v9H1" /></svg>
      <div className="ml-[23px] h-px w-[9px] bg-[#e0e0e0]" />
      <div className="relative ml-[7px] h-px w-[125px] bg-[#a0a0a0]">
        <div className="absolute -top-[8px] left-[60px] h-[17px] w-[6px] bg-[#a8a8a8]" />
      </div>
      <svg width="10" height="10" viewBox="0 0 10 10" stroke="#e0e0e0" strokeWidth="1" className="ml-[5px]"><path d="M5 0v10M0 5h10" /></svg>
      <span className="ml-[16px] mr-[12px] w-[33px] text-[13px]">100%</span>
    </div>
  );
}

const Dot = ({ active }: { active?: boolean }) => (
  <div className={`absolute bottom-[2px] left-1/2 h-[3px] -translate-x-1/2 rounded-full ${active ? "w-[18px] bg-[#4cc2ff]" : "w-[7px] bg-[#9a9a9a]"}`} />
);

const TaskIcon = ({ children, dot, active }: { children: ReactNode; dot?: boolean; active?: boolean }) => (
  <div className={`relative flex h-[50px] w-[49px] items-center justify-center rounded-[5px] ${active ? "bg-[#363230]" : ""}`}>
    {children}
    {(dot || active) && <Dot active={active} />}
  </div>
);

function Taskbar() {
  return (
    <div className="flex h-[60px] items-center bg-gradient-to-r from-[#1b2322] via-[#24231f] to-[#2a2522] text-white">
      <svg width="32" height="30" viewBox="0 0 32 30" className="ml-[24px]">
        <circle cx="22" cy="10" r="8" fill="#f0982a" />
        <path d="M7 28c-8 0-8-9-1-10 2-6 11-6 13-1 3-3 8 0 7 3 4 0 5 8-1 8z" fill="#8fb8ea" />
      </svg>
      <div className="ml-[8px] w-[110px] text-[14.500px] leading-[20px]">
        <div>26°C</div>
        <div className="whitespace-nowrap text-[#cfcfcf]">Mostly cloudy</div>
      </div>
      <svg width="30" height="30" viewBox="0 0 30 30" className="ml-[191px]">
        <path d="M0 1l14-1v14H0zM16 0h14v14H16zM0 16h14v14H0zM16 16h14v14H16z" fill="#3fb6f2" />
      </svg>
      <div className="relative ml-[16px] flex h-[40px] w-[275px] items-center overflow-hidden rounded-full bg-[#3b3c38]">
        <svg width="20" height="20" viewBox="0 0 20 20" fill="none" stroke="#e8e8e8" strokeWidth="1.600" className="ml-[15px]">
          <circle cx="8.500" cy="8.500" r="7" />
          <path d="m13.500 13.500 5.500 5.500" />
        </svg>
        <span className="ml-[11px] pt-[1px] text-[15.500px] text-[#d8d8d8]">Search</span>
        <svg width="45" height="30" viewBox="0 10 45 30" className="absolute right-[20px] top-[5px]">
          <circle cx="18" cy="15" r="1.800" fill="#d8b090" />
          <circle cx="7" cy="24" r="1.800" fill="#d8b090" />
          <path d="M18 15l16 7-2 3-14-7z" fill="#e6e3ea" />
          <path d="M33 18l9 1-1 11 2 7-16 2-2-4 5-4-3-2-18-3v-2l18 1z" fill="#e6e3ea" />
          <path d="M30 27l10 2v2l-11-2z" fill="#33304a" />
          <circle cx="35" cy="15" r="3.200" fill="#d8b090" />
          <path d="M32 12h6l9 2-6 4-2 3-1-6z" fill="#5a56c8" />
        </svg>
      </div>
      <div className="ml-[6px] flex w-[873px] items-center justify-between">
        <TaskIcon>
          <svg width="32" height="32" viewBox="0 0 32 32">
            <rect x="1" y="9" width="22" height="22" rx="2" fill="#6a6a6a" />
            <rect x="9" y="1" width="22" height="24" rx="2" fill="#f0f0f0" />
            <rect x="9" y="9" width="14" height="16" fill="#a8a8a8" />
          </svg>
        </TaskIcon>
        <TaskIcon><CopilotIcon size={30} id="cpt" /></TaskIcon>
        <TaskIcon dot>
          <svg width="30" height="32" viewBox="0 0 30 32">
            <path d="M0 2h11l3 3h16v6H0z" fill="#e0a010" />
            <path d="M0 6h30v26H0z" fill="#fbd04d" />
            <path d="M8 25h14v7H8z" fill="#0a74c4" />
            <path d="M11 27h8" stroke="#7cc8f0" />
          </svg>
        </TaskIcon>
        <TaskIcon>
          <svg width="32" height="32" viewBox="0 0 32 32">
            <defs>
              <linearGradient id="edge" x1="0" y1="0" x2="1" y2="1">
                <stop offset="0" stopColor="#31c4d4" />
                <stop offset="1" stopColor="#7ddc5c" />
              </linearGradient>
            </defs>
            <circle cx="16" cy="16" r="16" fill="url(#edge)" />
            <path d="M1 18C2 8 12 6 18 10c-6-2-11 2-10 9 1 6 7 11 14 10-10 5-20-1-21-11z" fill="#0e70c8" />
            <path d="M10 19c0-6 8-9 13-5 4 3 3 8 0 8-4 0-2-4-6-5-3 0-4 3-2 6 2 4 9 4 13 2-6 6-18 3-18-6z" fill="#0a4c90" />
          </svg>
        </TaskIcon>
        <TaskIcon>
          <svg width="30" height="34" viewBox="0 0 30 34">
            <path d="M8 7V2h14v5" fill="none" stroke="#3fb6f2" strokeWidth="2" />
            <rect x="0" y="6" width="30" height="28" rx="3" fill="#f5f5f5" />
            <rect x="9" y="13" width="6" height="6" fill="#e8532a" />
            <rect x="16" y="13" width="6" height="6" fill="#7cba2a" />
            <rect x="9" y="20" width="6" height="6" fill="#1e9be8" />
            <rect x="16" y="20" width="6" height="6" fill="#fbbc0a" />
          </svg>
        </TaskIcon>
        <TaskIcon>
          <svg width="30" height="36" viewBox="0 0 30 36" className="overflow-visible">
            <rect width="30" height="36" fill="#f5f5f5" />
            <text x="15" y="12" textAnchor="middle" fontSize="7" fontWeight="700" fill="#222" fontFamily="Open Sans">amazon</text>
            <path d="M6 15c6 3 12 3 17 0" fill="none" stroke="#f09020" strokeWidth="1.500" />
            <path d="M2 19h5l3 14h18l1-11H8z" fill="#3ea4d8" />
          </svg>
        </TaskIcon>
        <TaskIcon>
          <svg width="30" height="36" viewBox="0 0 30 36">
            <rect width="30" height="36" fill="#f0f0f0" />
            <text x="15" y="22" textAnchor="middle" fontSize="28" fill="#777" fontFamily="Open Sans">a</text>
            <circle cx="4" cy="30" r="2" fill="#e02020" />
            <circle cx="9.500" cy="30" r="2" fill="#f09020" />
            <circle cx="15" cy="30" r="2" fill="#e0c020" />
            <circle cx="20.500" cy="30" r="2" fill="#9050d0" />
            <circle cx="26" cy="30" r="2" fill="#3ea4d8" />
          </svg>
        </TaskIcon>
        <TaskIcon>
          <svg width="32" height="32" viewBox="0 0 32 32">
            <path d="M18 0l13 9v23H9V8z" fill="#1490df" />
            <path d="M9 20h22v12H11z" fill="#50d9ff" />
            <path d="M18 0l13 9-8 5-14-6z" fill="#0a5cb0" />
            <rect x="0" y="10" width="16" height="16" rx="1" fill="#0a64c0" />
            <text x="8" y="23" textAnchor="middle" fontSize="13" fontWeight="700" fill="#fff" fontFamily="Open Sans">O</text>
          </svg>
        </TaskIcon>
        <TaskIcon>
          <svg width="28" height="32" viewBox="0 0 28 32">
            <ellipse cx="14" cy="16" rx="13.500" ry="15.500" fill="#2095d4" />
            <path d="M4 16l18-8-3 16-5-4-3 3-1-5 8-6-10 5z" fill="#fff" />
          </svg>
        </TaskIcon>
        <TaskIcon>
          <svg width="30" height="36" viewBox="0 0 30 36" fill="none">
            <ellipse cx="15" cy="18" rx="12" ry="15" stroke="#38b020" strokeWidth="5" />
            <path d="M6 6 3 14v9l3 7" stroke="#2a8c18" strokeWidth="5" strokeDasharray="2 2" />
          </svg>
        </TaskIcon>
        <TaskIcon>
          <svg width="32" height="36" viewBox="0 0 32 36">
            <circle cx="14" cy="14" r="13" fill="#1c2a36" />
            <path d="M30 16l-8 4-6-4-3 2 5 5-5 5 3 2 6-4 8 4z" fill="#0e7ac8" />
          </svg>
        </TaskIcon>
        <TaskIcon>
          <svg width="30" height="32" viewBox="0 0 32 36">
            <path d="M3 4c5-4 10-3 13-2 4-2 11-2 14 2 2 4 0 10-2 13-1 2-1 5-3 6-2 0-3-2-4-3l-1 8c0 4-4 6-6 2-1-3 0-8-1-10-3 2-5 3-7 0C4 17 0 9 3 4z" fill="#336791" stroke="#c8d8e8" strokeWidth="1.200" />
            <path d="M15 3c-3 5-3 10-1 15M22 8c-1 4 0 7 2 8" fill="none" stroke="#c8d8e8" strokeWidth="1" />
          </svg>
        </TaskIcon>
        <TaskIcon dot>
          <svg width="30" height="30" viewBox="0 0 32 32">
            <circle cx="16" cy="16" r="16" fill="#e33b2e" />
            <path d="M16 16 2 8a16 16 0 0 0 10 23z" fill="#2fa44f" />
            <path d="M16 16l14-8a16 16 0 0 1-18 23z" fill="#fbc02d" />
            <circle cx="16" cy="16" r="7.500" fill="#4a8ef0" stroke="#fff" strokeWidth="2" />
          </svg>
        </TaskIcon>
        <TaskIcon dot>
          <svg width="30" height="33" viewBox="0 0 32 36">
            <path d="M14 0l6 5-4 6-6-5z" fill="#f07878" />
            <path d="M0 17 9 8l7 8-8 9z" fill="#6a9cf0" />
            <path d="M16 16l8-8 8 8-8 9z" fill="#8cc850" />
            <path d="M8 25l8-8 8 9-8 10z" fill="#f5d860" />
            <circle cx="16" cy="25" r="2.500" fill="#222" />
            <path d="M16 8v16M14 12l6 5" stroke="#222" strokeWidth="2" />
          </svg>
        </TaskIcon>
        <TaskIcon dot>
          <svg width="30" height="33" viewBox="0 0 32 36">
            <path d="M23 0l9 4v28l-9 4L7 21l-5 4-2-2v-10l2-2 5 4z" fill="#0078d4" />
            <path d="M23 9 12 18l11 9z" fill="#1c1c1c" />
            <path d="M23 0l9 4v28l-9 4z" fill="#2a9be8" />
          </svg>
        </TaskIcon>
        <TaskIcon active>
          <svg width="30" height="32" viewBox="0 0 30 32">
            <rect x="6" y="0" width="24" height="32" rx="1" fill="#107c41" />
            <rect x="18" y="0" width="12" height="8" fill="#33c481" />
            <rect x="18" y="8" width="12" height="8" fill="#21a366" />
            <rect x="18" y="24" width="12" height="8" fill="#185c37" />
            <rect x="0" y="8" width="15" height="16" rx="1" fill="#185c37" />
            <text x="7.500" y="21" textAnchor="middle" fontSize="12" fontWeight="700" fill="#fff" fontFamily="Liberation Sans">X</text>
          </svg>
        </TaskIcon>
      </div>
      <div className="ml-auto flex items-center">
        <svg width="16" height="10" viewBox="0 0 16 10" fill="none" stroke="#f0f0f0" strokeWidth="1.800"><path d="M1 9l7-7 7 7" /></svg>
        <svg width="20" height="18" viewBox="0 0 20 18" className="ml-[19px]">
          <circle cx="7" cy="9" r="6" fill="#c8c8c8" />
          <circle cx="12" cy="6" r="5" fill="#9a9a9a" />
          <circle cx="14" cy="12" r="6" fill="#555" stroke="#ddd" />
          <path d="M13 9v6M15.500 9v6" stroke="#eee" />
        </svg>
        <svg width="20" height="18" viewBox="0 0 20 18" fill="none" stroke="#f0f0f0" strokeWidth="1.500" className="ml-[24px]">
          <path d="M1 6c5-6 13-6 18 0M4 10c3-4 9-4 12 0M7 13c2-2 4-2 6 0" />
          <circle cx="10" cy="16" r="1" fill="#f0f0f0" />
        </svg>
        <svg width="20" height="18" viewBox="0 0 20 18" fill="none" stroke="#f0f0f0" strokeWidth="1.300" className="ml-[12px]">
          <path d="M1 6h3l5-4v14l-5-4H1zM12 6c1 2 1 4 0 6M15 3c2 4 2 8 0 12" />
        </svg>
        <svg width="20" height="18" viewBox="0 0 20 18" fill="none" stroke="#f0f0f0" strokeWidth="1.300" className="ml-[10px]">
          <path d="M1 5h15v11H1zM17 8h2v5h-2" />
          <path d="M4 6 7 1v5h3l-3 6V8H4z" fill="#f0f0f0" />
        </svg>
        <div className="ml-[18px] mr-[25px] text-right text-[14.500px] leading-[20px] text-[#f0f0f0]">
          <div>4:47 PM</div>
          <div>9/4/2025</div>
        </div>
      </div>
    </div>
  );
}

export default function App() {
  return (
    <div className="h-[1080px] w-[1920px] overflow-hidden bg-[#191513] font-['Open_Sans',sans-serif]">
      <TitleBar />
      <TabsRow />
      <Ribbon />
      <FormulaBar />
      <div className="mt-[8px] flex">
        <Sheet />
        <VScroll />
      </div>
      <SheetTabs />
      <StatusBar />
      <Taskbar />
    </div>
  );
}
